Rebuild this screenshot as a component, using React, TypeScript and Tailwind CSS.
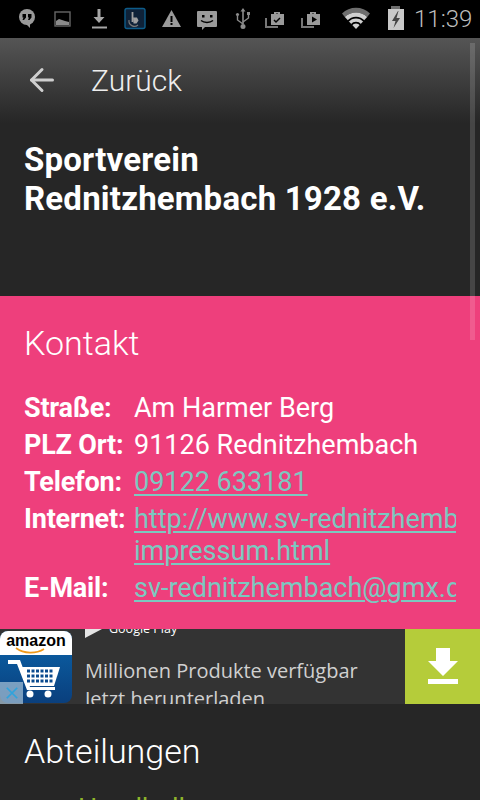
import { ArrowLeft } from 'lucide-react'

const rows = [
  { label: 'Straße:', lines: ['Am Harmer Berg'] },
  { label: 'PLZ Ort:', lines: ['91126 Rednitzhembach'] },
  { label: 'Telefon:', lines: ['09122 633181'], link: true },
  { label: 'Internet:', lines: ['http://www.sv-rednitzhembach.de/', 'impressum.html'], link: true },
  { label: 'E-Mail:', lines: ['sv-rednitzhembach@gmx.de'], link: true },
]

function StatusIcon({ children, className = 'w-9' }: { children: React.ReactNode; className?: string }) {
  return (
    <svg viewBox="0 0 36 38" className={`h-[38px] shrink-0 ${className}`} fill="#8c8c8c">
      {children}
    </svg>
  )
}

function StatusBar() {
  return (
    <div className="flex h-[38px] items-center bg-black pl-[9px]">
      <StatusIcon>
        <circle cx="18" cy="17" r="8" fill="#9a9a9a" />
        <path d="M18 24h5v5z" fill="#9a9a9a" transform="translate(-2 -1)" />
        <path d="M13.500 14h3.500v3.500l-2 2.500h-1.500l1-2.500h-1zM19 14h3.500v3.500l-2 2.500H19l1-2.500h-1z" fill="#000" />
      </StatusIcon>
      <StatusIcon>
        <rect x="10" y="12" width="15" height="14" fill="none" stroke="#666" strokeWidth="1.400" />
        <path d="M11 25v-4l3-2 3 1 3 1 4 1v3z" fill="#8c8c8c" />
      </StatusIcon>
      <StatusIcon>
        <path d="M16.500 9h3v8h4l-5.500 6-5.500-6h4z" fill="#a6a6a6" />
        <rect x="11" y="26.500" width="15" height="2" fill="#a6a6a6" />
      </StatusIcon>
      <StatusIcon>
        <rect x="8" y="8.500" width="20" height="20" rx="2" fill="#0f2238" stroke="#0d5c8a" strokeWidth="1.400" />
        <path d="M15.500 12v10" stroke="#a0a0a0" strokeWidth="1.800" />
        <path d="M16 17.500h4l1.500 3-2 3h-3z" fill="#a0a0a0" />
        <path d="M12 20a5.500 5.500 0 0 0 9 5" fill="none" stroke="#777" strokeWidth="1.200" />
      </StatusIcon>
      <StatusIcon>
        <path d="M18.500 10l9.500 17H9z" fill="#9a9a9a" />
        <rect x="17.500" y="16" width="2" height="6" fill="#000" />
        <rect x="17.500" y="23" width="2" height="2" fill="#000" />
      </StatusIcon>
      <StatusIcon>
        <path d="M9 11h18a1 1 0 0 1 1 1v14a1 1 0 0 1-1 1h-11l-3 3v-3H9a1 1 0 0 1-1-1V12a1 1 0 0 1 1-1z" fill="#9a9a9a" />
        <rect x="13" y="15" width="2.500" height="2.500" fill="#000" />
        <rect x="21" y="15" width="2.500" height="2.500" fill="#000" />
        <path d="M12 20.500c3 2.600 9 2.600 12 0" fill="none" stroke="#000" strokeWidth="1.400" />
      </StatusIcon>
      <StatusIcon>
        <path d="M18 8l2.500 3.500h-1.700V24h-1.600V11.500h-1.700z" fill="#8c8c8c" />
        <circle cx="18" cy="26.500" r="2.500" fill="#8c8c8c" />
        <path d="M18 24l-5.500-4v-4M18 22l5.500-4v-3" fill="none" stroke="#8c8c8c" strokeWidth="1.400" />
        <circle cx="12.500" cy="14.500" r="1.600" />
        <rect x="22" y="12" width="3" height="3" />
      </StatusIcon>
      <StatusIcon>
        <path d="M13 15v-3h6v3h-2v-1.500h-2V15z" fill="#9a9a9a" />
        <rect x="10" y="14" width="13" height="11" fill="#9a9a9a" />
        <path d="M4 18h2v8h11v2H4z" fill="#777" />
        <path d="M13 20l2 2 4-4" fill="none" stroke="#000" strokeWidth="1.500" />
      </StatusIcon>
      <StatusIcon>
        <path d="M13 15v-3h6v3h-2v-1.500h-2V15z" fill="#9a9a9a" />
        <rect x="10" y="14" width="13" height="11" fill="#9a9a9a" />
        <path d="M4 18h2v8h11v2H4z" fill="#777" />
        <path d="M15 16.500l5 3-5 3z" fill="#000" />
      </StatusIcon>
      <svg viewBox="0 0 36 38" className="ml-[5px] h-[38px] w-9 shrink-0">
        <path d="M4 13.500a20 20 0 0 1 28 0l-2.800 3.500a16 16 0 0 0-22.400 0z" fill="#6e6e6e" />
        <path d="M6.800 17a16 16 0 0 1 22.400 0L18 29z" fill="#cfcfcf" />
        <path d="M9.400 20.500a11.500 11.500 0 0 1 17.200 0l-1.200 1.300a9.800 9.800 0 0 0-14.800 0zM12.800 24.200a6.800 6.800 0 0 1 10.400 0l-1.200 1.300a5 5 0 0 0-8 0z" fill="#000" />
      </svg>
      <svg viewBox="0 0 20 38" className="ml-[12px] h-[38px] w-5 shrink-0">
        <rect x="5" y="6" width="9" height="3" fill="#6e6e6e" />
        <rect x="2" y="9" width="16" height="21" fill="#c9c9c9" />
        <path d="M12 11l-6 10h3.500l-2 7 6.500-10H10.500l2-7z" fill="#444" />
      </svg>
      <span className="ml-[8px] font-['Roboto',sans-serif] text-[24px] leading-none font-light text-[#bdbdbd]">11:39</span>
    </div>
  )
}

function AmazonIcon() {
  return (
    <div className="mt-[2px] h-[72px] w-[72px] shrink-0 overflow-hidden rounded-[8px] bg-gradient-to-b from-[#0a66ac] to-[#0a3f7d]">
      <div className="relative h-[24px] bg-white text-center font-['Liberation_Sans',sans-serif] text-[16px] leading-[20px] font-bold text-black">
        amazon
        <svg viewBox="0 0 32 8" className="absolute top-[16px] left-[15px] h-[8px] w-[32px]">
          <path d="M1 1c8 6 20 6 28 1" fill="none" stroke="#f09a1a" strokeWidth="1.700" />
        </svg>
      </div>
      <svg viewBox="0 0 72 48" className="h-[48px] w-[72px]">
        <path d="M8 5h12l10 27h25v3H27L17 9H8z" fill="#fff" />
        <path d="M21 12h39l-6 19H28z" fill="#fff" />
        <g fill="#0a4a8e">
          {[0, 1, 2].map(r =>
            [0, 1, 2, 3, 4, 5].map(c => <rect key={`${r}-${c}`} x={27 + c * 4.500} y={14.500 + r * 5} width="3" height="3" />),
          )}
        </g>
        <circle cx="30" cy="39" r="3.500" fill="#fff" />
        <circle cx="48" cy="39" r="3.500" fill="#fff" />
      </svg>
    </div>
  )
}

function AdBanner() {
  return (
    <div className="relative flex h-[75px] overflow-hidden bg-[#333333]">
      <AmazonIcon />
      <div className="min-w-0 flex-1 pl-[13px] font-['Open_Sans',sans-serif] text-[#d0d0d0]">
        <div className="-mt-[8px] flex h-[17px] items-center">
          <svg viewBox="0 0 17 17" className="h-[17px] w-[17px] shrink-0">
            <path d="M0 0l17 8L0 17z" fill="#e5e5e5" />
          </svg>
          <span className="ml-[7px] text-[12.500px] leading-none text-white">Google Play</span>
        </div>
        <div className="mt-[19px] text-[20px] leading-[28px] whitespace-nowrap">Millionen Produkte verfügbar</div>
        <div className="text-[20px] leading-[28px] whitespace-nowrap">Jetzt herunterladen</div>
      </div>
      <div className="flex w-[75px] shrink-0 items-center justify-center bg-[#b5cc3a]">
        <svg viewBox="0 0 30 37" className="h-[37px] w-[30px]">
          <path d="M8 0h14v13h8L15 28 0 13h8z" fill="#fff" />
          <rect y="31" width="30" height="5" fill="#fff" />
        </svg>
      </div>
      <div className="absolute bottom-0 left-0 flex h-[22px] w-[23px] items-center justify-center bg-[#a9c4d8]/70">
        <svg viewBox="0 0 16 16" className="h-[14px] w-[14px]">
          <path d="M2 2l12 12M14 2L2 14" stroke="#2fa3dc" strokeWidth="2" />
        </svg>
      </div>
    </div>
  )
}

export default function App() {
  return (
    <div className="relative h-[800px] w-[480px] overflow-hidden bg-[#262626] font-['Roboto',sans-serif] text-white">
      <StatusBar />

      <div className="h-[258px] bg-[linear-gradient(#555555,#262626_85px)]">
        <div className="flex h-[84px] items-center pl-[24px]">
          <ArrowLeft className="h-9 w-9 text-[#cfcfcf]" strokeWidth={2} />
          <span className="ml-[31px] text-[30px] font-light text-[#eeeeee]">Zurück</span>
        </div>
        <h1 className="mt-[18px] px-[24px] text-[33px] leading-[39px] font-bold tracking-[0.2px]">
          Sportverein
          <br />
          Rednitzhembach 1928 e.V.
        </h1>
      </div>

      <section className="h-[333px] bg-[#ee3f7c] px-[24px] pt-[27px]">
        <h2 className="text-[34px] leading-[40px] font-light">Kontakt</h2>
        <div className="mt-[29px] flex w-[432px] flex-col gap-[5px] overflow-hidden">
          {rows.map(row => (
            <div key={row.label} className="flex">
              <div className="w-[110px] shrink-0 text-[27px] leading-[32px] font-bold tracking-[-0.2px]">{row.label}</div>
              <div className="min-w-0 flex-1 overflow-hidden">
                {row.lines.map(line => (
                  <div
                    key={line}
                    className={`text-[27px] leading-[32px] whitespace-nowrap ${row.link ? 'text-[#7cc8c0] underline decoration-2 underline-offset-[3px]' : ''}`}
                  >
                    {line}
                  </div>
                ))}
              </div>
            </div>
          ))}
        </div>
      </section>

      <AdBanner />

      <section className="px-[24px] pt-[27px]">
        <h2 className="text-[34px] leading-[40px] font-light">Abteilungen</h2>
        <div className="mt-[22px] pl-[54px] text-[27px] leading-[32px] text-[#8fb52b]">Handball</div>
      </section>

      <div className="absolute top-[43px] left-[470px] h-[297px] w-[5px] bg-white/15" />
    </div>
  )
}
